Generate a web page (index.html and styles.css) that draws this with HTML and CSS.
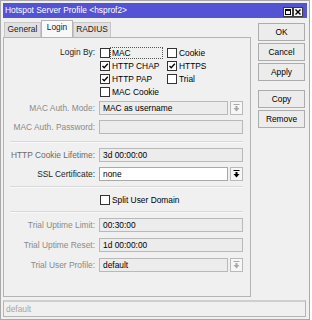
FILE: index.html
```html
<!DOCTYPE html>
<html lang="en">
<head>
  <meta charset="UTF-8" />
  <title>Hotspot Server Profile</title>
  <link rel="stylesheet" href="styles.css">
</head>
<body>
  <div class="window">
    <div class="titlebar">
      <span class="title">Hotspot Server Profile &lt;hsprof2&gt;</span>
      <div class="winbtns">
        <span class="wbtn"><span class="maxbox"></span></span>
        <span class="wbtn">
          <svg width="6" height="6" viewBox="0 0 6 6"><path d="M0.5 0.5L5.5 5.5M5.5 0.5L0.5 5.5" stroke="#000" stroke-width="1.4"/></svg>
        </span>
      </div>
    </div>

    <div class="body">
      <div class="main">
        <div class="tabs">
          <div class="tab t-general">General</div>
          <div class="tab t-login active">Login</div>
          <div class="tab t-radius">RADIUS</div>
        </div>

        <div class="panel">
          <div class="row login-by">
            <span class="lbl dark">Login By:</span>
            <div class="checks">
              <div class="chk"><span class="box"></span><span class="focus">MAC</span></div>
              <div class="chk"><span class="box"></span><span class="txt">Cookie</span></div>
              <div class="chk"><span class="box"><svg width="8" height="8" viewBox="0 0 8 8"><path d="M1.5 4L3.2 5.8L6.8 1.8" fill="none" stroke="#000" stroke-width="1.3"/></svg></span><span class="txt">HTTP CHAP</span></div>
              <div class="chk"><span class="box"><svg width="8" height="8" viewBox="0 0 8 8"><path d="M1.5 4L3.2 5.8L6.8 1.8" fill="none" stroke="#000" stroke-width="1.3"/></svg></span><span class="txt">HTTPS</span></div>
              <div class="chk"><span class="box"><svg width="8" height="8" viewBox="0 0 8 8"><path d="M1.5 4L3.2 5.8L6.8 1.8" fill="none" stroke="#000" stroke-width="1.3"/></svg></span><span class="txt">HTTP PAP</span></div>
              <div class="chk"><span class="box"></span><span class="txt">Trial</span></div>
              <div class="chk"><span class="box"></span><span class="txt">MAC Cookie</span></div>
            </div>
          </div>

          <div class="row first">
            <span class="lbl">MAC Auth. Mode:</span>
            <div class="select">
              <span class="field">MAC as username</span>
              <span class="drop off">
                <svg width="7" height="8" viewBox="0 0 7 8"><rect x="0.5" y="0" width="6" height="1"/><rect x="2.5" y="2" width="2" height="2"/><path d="M0.5 4h6L3.5 7.5z"/></svg>
              </span>
            </div>
          </div>

          <div class="row">
            <span class="lbl">MAC Auth. Password:</span>
            <span class="field"></span>
          </div>

          <div class="sep sep-a"></div>

          <div class="row after-sep">
            <span class="lbl mid">HTTP Cookie Lifetime:</span>
            <span class="field">3d 00:00:00</span>
          </div>

          <div class="row">
            <span class="lbl dark">SSL Certificate:</span>
            <div class="select">
              <span class="field white">none</span>
              <span class="drop">
                <svg width="7" height="8" viewBox="0 0 7 8"><rect x="0.5" y="0" width="6" height="1"/><rect x="2.5" y="2" width="2" height="2"/><path d="M0.5 4h6L3.5 7.5z"/></svg>
              </span>
            </div>
          </div>

          <div class="sep sep-b"></div>

          <div class="row split">
            <span class="lbl"></span>
            <div class="chk"><span class="box"></span><span class="txt">Split User Domain</span></div>
          </div>

          <div class="sep sep-c"></div>

          <div class="row after-sep">
            <span class="lbl">Trial Uptime Limit:</span>
            <span class="field">00:30:00</span>
          </div>

          <div class="row wide">
            <span class="lbl">Trial Uptime Reset:</span>
            <span class="field">1d 00:00:00</span>
          </div>

          <div class="row wide">
            <span class="lbl">Trial User Profile:</span>
            <div class="select">
              <span class="field">default</span>
              <span class="drop off">
                <svg width="7" height="8" viewBox="0 0 7 8"><rect x="0.5" y="0" width="6" height="1"/><rect x="2.5" y="2" width="2" height="2"/><path d="M0.5 4h6L3.5 7.5z"/></svg>
              </span>
            </div>
          </div>
        </div>
      </div>

      <div class="side">
        <div class="btn">OK</div>
        <div class="btn">Cancel</div>
        <div class="btn">Apply</div>
        <div class="btn spaced">Copy</div>
        <div class="btn">Remove</div>
      </div>
    </div>

    <div class="status">default</div>
  </div>
</body>
</html>
```

FILE: styles.css
```css
* {
  box-sizing: border-box;
}

html, body {
  margin: 0;
  padding: 0;
  background: #fff;
  font-family: 'Liberation Sans', Arial, sans-serif;
  font-size: 8.4px;
  color: #000;
}

.window {
  width: 310px;
  height: 320px;
  padding: 2px 2px 1px;
  border: 1px solid #a9a9a9;
  background: #f0f0f0;
  display: flex;
  flex-direction: column;
}

.titlebar {
  height: 15px;
  background: #5353d3;
  color: #fff;
  display: flex;
  justify-content: space-between;
  padding: 0 4px 0 2px;
}

.title {
  line-height: 15px;
}

.winbtns {
  display: flex;
  margin-top: 4px;
}

.wbtn {
  width: 10px;
  height: 10px;
  background: #f4f4f4;
  border: 1px solid #3a3a3a;
  display: flex;
  align-items: center;
  justify-content: center;
}

.maxbox {
  width: 6px;
  height: 6px;
  border: 1px solid #000;
  border-top-width: 2px;
}

.body {
  display: flex;
}

.main {
  width: 248px;
}

.tabs {
  height: 19px;
  display: flex;
  align-items: flex-end;
  padding-left: 1px;
}

.tab {
  height: 15px;
  line-height: 13px;
  text-align: center;
  border: 1px solid #c6c6c6;
  border-bottom: none;
  background: #e1e1e1;
  color: #222;
}

.t-general { width: 37px; }
.t-login { width: 32px; }
.t-radius { width: 38px; }

.tab.active {
  height: 17px;
  line-height: 12px;
  background: #f8f8f8;
  border-color: #b4b4b4;
}

.panel {
  height: 260px;
  border: 1px solid #b4b4b4;
  padding-top: 8px;
}

.row {
  display: grid;
  grid-template-columns: 91px 144px;
  column-gap: 4px;
  align-items: center;
  height: 14px;
  margin-top: 5px;
}

.row.first {
  margin-top: 3px;
}

.row.after-sep {
  margin-top: 5px;
}

.row.wide {
  margin-top: 6px;
}

.lbl {
  text-align: right;
  white-space: nowrap;
  color: #8a8a8a;
}

.lbl.mid {
  color: #6a6a6a;
}

.lbl.dark {
  color: #1e1e1e;
}

.login-by {
  height: 52px;
  margin-top: 0;
  align-items: start;
}

.login-by .lbl {
  line-height: 13px;
}

.checks {
  display: grid;
  grid-template-columns: 67px 70px;
  grid-auto-rows: 13px;
}

.chk {
  display: flex;
  align-items: center;
  padding-left: 1px;
  white-space: nowrap;
}

.box {
  width: 10px;
  height: 10px;
  border: 1px solid #333;
  background: #fff;
  display: flex;
  align-items: center;
  justify-content: center;
}

.txt {
  margin-left: 2px;
}

.focus {
  width: 53px;
  height: 12px;
  line-height: 10px;
  padding: 0 1px;
  border: 1px dotted #555;
}

.field {
  display: block;
  height: 14px;
  line-height: 12px;
  padding: 0 3px;
  border: 1px solid #b9b9b9;
  background: #ececec;
  white-space: nowrap;
}

.field.white {
  background: #fff;
  border-color: #a9a9a9;
}

.select {
  display: grid;
  grid-template-columns: 129px 13px;
  column-gap: 2px;
}

.drop {
  height: 14px;
  border: 1px solid #b9b9b9;
  background: #f6f6f6;
  display: flex;
  align-items: center;
  justify-content: center;
  fill: #000;
}

.drop.off {
  fill: #a8a8a8;
}

.sep {
  margin-left: 6px;
  width: 233px;
  border-top: 1px solid #d9d9d9;
  border-bottom: 1px solid #f9f9f9;
}

.sep-a {
  margin-top: 7px;
  margin-bottom: 4px;
}

.sep-b {
  margin-top: 5px;
}

.split {
  margin-top: 5px;
  height: 13px;
}

.sep-c {
  margin-top: 5px;
}

.side {
  width: 47px;
  margin-left: 7px;
  padding-top: 5px;
  display: flex;
  flex-direction: column;
  gap: 2px;
}

.btn {
  height: 18px;
  line-height: 16px;
  text-align: center;
  border: 1px solid #acacac;
  background: #ececec;
}

.btn.spaced {
  margin-top: 7px;
}

.status {
  height: 17px;
  margin-top: 3px;
  margin-right: 1px;
  padding-left: 2px;
  line-height: 14px;
  border: 1px solid #b4b4b4;
  border-top: 2px solid #cfcfcf;
  color: #a6a6a6;
}
```
